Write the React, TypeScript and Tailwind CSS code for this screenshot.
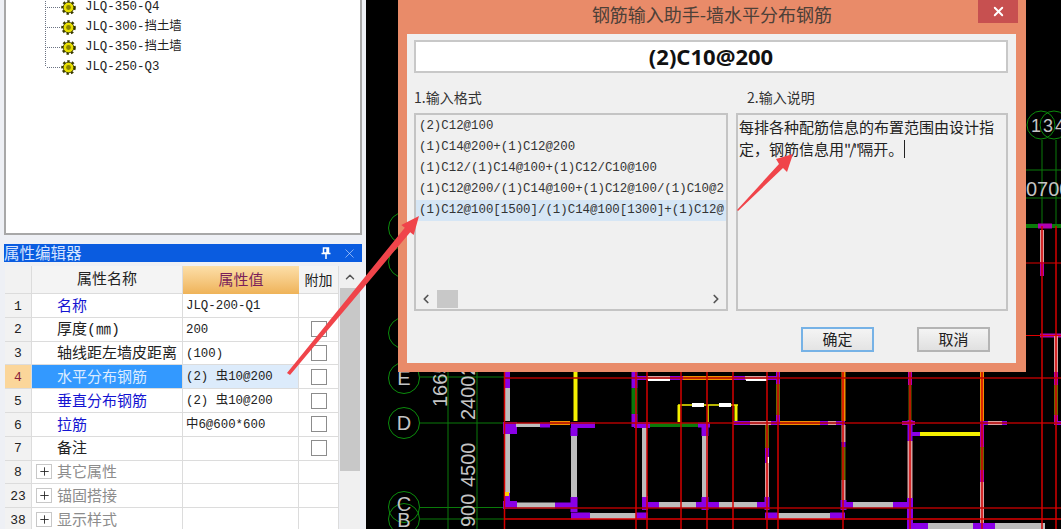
import { X, ChevronUp, ChevronLeft, ChevronRight, Plus } from "lucide-react";

const PURPLE = "#8a00e6";
const MAGENTA = "#b000b0";
const GRAY = "#bdbdbd";
const PINK = "#d8a0a0";
const OLIVE = "#6a6a00";
const GREEN = "#0a7a0a";
const ORANGE = "#f09000";
const YELLOW = "#f4f000";
const WHITE = "#ffffff";

// x1, y1, x2, y2, colour, width
const walls: [number, number, number, number, string, number][] = [
  [507, 372, 507, 388, PURPLE, 6],
  [507, 388, 507, 421, GRAY, 6],
  [510, 422, 510, 434, PURPLE, 14],
  [516, 425, 540, 425, GRAY, 4],
  [540, 425, 550, 425, PURPLE, 5],
  [550, 423, 570, 423, ORANGE, 4],
  [571, 425, 595, 425, PURPLE, 6],
  [574, 428, 574, 436, PURPLE, 7],
  [575.5, 372, 575.5, 421, YELLOW, 4],
  [507, 434, 507, 493, GRAY, 6],
  [510, 501, 510, 509, PURPLE, 14],
  [507, 493, 507, 501, PURPLE, 6],
  [517, 505.5, 555, 505.5, GRAY, 6],
  [555, 505.5, 571, 505.5, PURPLE, 6],
  [574, 436, 574, 497, GRAY, 6],
  [574, 497, 574, 512, PURPLE, 7],
  [571, 516, 590, 516, PURPLE, 7],
  [590, 516, 636, 516, GRAY, 6],
  [636, 516, 648, 516, PURPLE, 7],
  [645, 496, 645, 510, PURPLE, 6],
  [644.5, 427, 644.5, 497, GRAY, 5],
  [648, 505, 659, 505, PURPLE, 6],
  [659, 505, 696, 505, GRAY, 6],
  [696, 505, 713, 505, PURPLE, 6],
  [705, 436, 705, 497, GRAY, 6],
  [705, 425, 705, 436, PURPLE, 7],
  [705, 497, 705, 510, PURPLE, 7],
  [650, 425, 698, 425, GREEN, 4],
  [698, 425, 710, 425, PURPLE, 5],
  [634.5, 372, 634.5, 388, PURPLE, 6],
  [634.5, 388, 634.5, 414, GREEN, 6],
  [634.5, 414, 634.5, 427, PURPLE, 6],
  [634, 425, 650, 425, PURPLE, 6],
  [634, 378, 647, 378, PURPLE, 4],
  [647, 378, 670, 378, PINK, 4],
  [648, 380, 670, 380, WHITE, 2],
  [670, 378, 683, 378, PURPLE, 4],
  [683, 378, 732, 378, ORANGE, 4],
  [732, 378, 745, 378, PURPLE, 4],
  [745, 378, 768, 378, PINK, 4],
  [746, 380, 767, 380, WHITE, 2],
  [768, 378, 780, 378, PURPLE, 4],
  [778, 372, 778, 384, PURPLE, 4],
  [778, 384, 778, 415, OLIVE, 4],
  [778, 415, 778, 423, PURPLE, 4],
  [678, 405, 738, 405, YELLOW, 1.5],
  [679, 405, 679, 422, YELLOW, 3],
  [736, 405, 736, 422, YELLOW, 3],
  [708, 405, 708, 422, YELLOW, 1.5],
  [692, 405, 704, 405, WHITE, 4],
  [719, 405, 731, 405, WHITE, 4],
  [733, 423, 750, 423, PURPLE, 4],
  [750, 423, 771, 423, PINK, 4],
  [771, 423, 780, 423, PURPLE, 4],
  [780, 423, 820, 423, ORANGE, 4],
  [820, 423, 828, 423, PURPLE, 4],
  [828, 423, 836, 423, PINK, 4],
  [836, 423, 845, 423, PURPLE, 4],
  [767, 425, 767, 448, OLIVE, 4],
  [767, 448, 767, 463, PURPLE, 4],
  [768, 457, 768, 463, WHITE, 2],
  [767, 463, 767, 497, PINK, 4],
  [767, 497, 767, 510, PURPLE, 5],
  [713, 505, 719, 505, PURPLE, 6],
  [719, 505, 757, 505, GRAY, 6],
  [757, 505, 767, 505, PURPLE, 6],
  [620, 516, 636, 516, GRAY, 6],
  [765, 516, 778, 516, PURPLE, 7],
  [778, 516, 830, 516, GRAY, 6],
  [830, 516, 845, 516, PURPLE, 7],
  [843.5, 372, 843.5, 421, ORANGE, 4],
  [843.5, 425, 843.5, 442, PINK, 4],
  [843.5, 442, 843.5, 447, PURPLE, 4],
  [843.5, 447, 843.5, 480, OLIVE, 4],
  [843.5, 480, 843.5, 500, PINK, 4],
  [843.5, 500, 843.5, 510, PURPLE, 6],
  [843, 505, 853, 505, PURPLE, 6],
  [853, 505, 893, 505, GRAY, 6],
  [893, 505, 910, 505, PURPLE, 6],
  [910, 372, 910, 385, MAGENTA, 4],
  [910, 385, 910, 420, OLIVE, 3],
  [910, 420, 910, 441, PURPLE, 5],
  [910, 441, 910, 498, PINK, 5],
  [910, 498, 910, 529, PURPLE, 6],
  [902, 423, 915, 423, MAGENTA, 4],
  [910, 434, 920, 434, PURPLE, 4],
  [920, 434, 982, 434, YELLOW, 4],
  [982, 372, 982, 421, ORANGE, 4],
  [982, 421, 982, 447, MAGENTA, 4],
  [982, 447, 982, 470, OLIVE, 4],
  [982, 470, 982, 482, MAGENTA, 4],
  [982, 482, 982, 529, PINK, 4],
  [982, 423, 988, 423, PURPLE, 4],
  [988, 423, 1002, 423, PINK, 4],
  [1002, 423, 1007, 423, PURPLE, 4],
  [912, 526, 928, 526, PURPLE, 6],
  [928, 526, 973, 526, GRAY, 6],
  [973, 526, 995, 526, PURPLE, 6],
  [995, 526, 1045, 526, GRAY, 6],
  [1040, 335.5, 1061, 335.5, MAGENTA, 4],
  [1056, 337, 1056, 372, PINK, 4],
  [1056, 372, 1056, 385, MAGENTA, 4],
  [1056, 385, 1056, 415, OLIVE, 4],
  [1056, 415, 1056, 425, MAGENTA, 4],
  [1055, 423, 1061, 423, PURPLE, 4],
  [1026, 226, 1061, 226, GREEN, 4],
  [1038, 226, 1052, 226, MAGENTA, 5],
  [1042, 230, 1042, 262, PINK, 4],
  [1042, 262, 1042, 276, MAGENTA, 4],
  [1056, 336, 1056, 365, PINK, 4],
];

const redDark = [378, 423, 508];
const redBright = [519];
const redVerticals = [504.5, 636, 647, 681, 707, 733, 767, 778, 843, 910, 982, 1042, 1056];
const circles: [number, number][] = [
  [404, 228], [404, 262], [404, 333], [404, 378], [404, 423], [404, 507], [404, 519],
];

function Cad() {
  return (
    <svg viewBox="366 0 695 529" className="block h-full w-full bg-black">
      {circles.map(([cx, cy]) => (
        <circle key={cy} cx={cx} cy={cy} r={15.5} fill="none" stroke="#0c8c0c" strokeWidth={1} />
      ))}
      <circle cx={1041} cy={125} r={14} fill="none" stroke="#0c8c0c" />
      <circle cx={1054} cy={125} r={14} fill="none" stroke="#0c8c0c" />
      {[423, 377, 507.5, 519].map((y) => (
        <line key={y} x1={420} y1={y} x2={504} y2={y} stroke={GREEN} />
      ))}
      <line x1={448} y1={372} x2={448} y2={529} stroke={GREEN} />
      <line x1={477} y1={372} x2={477} y2={529} stroke={GREEN} />
      <line x1={1026} y1={170} x2={1061} y2={170} stroke={GREEN} />
      <line x1={1026} y1={198} x2={1061} y2={198} stroke={GREEN} />
      <line x1={1042} y1={140} x2={1042} y2={226} stroke={GREEN} />
      <line x1={1056} y1={140} x2={1056} y2={226} stroke={GREEN} />

      <g className="font-['Liberation_Sans',sans-serif]" fill="#c4c4c4" fontSize={20}>
        <text x={404} y={385} textAnchor="middle">E</text>
        <text x={404} y={430} textAnchor="middle">D</text>
        <text x={404} y={511} textAnchor="middle">C</text>
        <text x={404} y={527} textAnchor="middle">B</text>
        <text transform="rotate(-90 447 407)" x={447} y={407}>1665</text>
        <text transform="rotate(-90 475 420)" x={475} y={420}>24002</text>
        <text transform="rotate(-90 475 487)" x={475} y={487}>4500</text>
        <text transform="rotate(-90 475 527)" x={475} y={527}>900</text>
        <text x={1026} y={196}>0700</text>
        <text x={1031} y={132} fontSize={18}>1</text>
        <text x={1043} y={132} fontSize={18}>3</text>
        <text x={1055} y={132} fontSize={18}>4</text>
      </g>

      {walls.map(([x1, y1, x2, y2, c, w], i) => (
        <line key={i} x1={x1} y1={y1} x2={x2} y2={y2} stroke={c} strokeWidth={w} />
      ))}

      {redDark.map((y) => (
        <line key={y} x1={504} y1={y} x2={1061} y2={y} stroke="#b00000" strokeWidth={1.5} />
      ))}
      {redBright.map((y) => (
        <line key={y} x1={504} y1={y} x2={1061} y2={y} stroke="#e00000" strokeWidth={1.5} />
      ))}
      <line x1={1026} y1={335.5} x2={1061} y2={335.5} stroke="#e00000" />
      <line x1={1026} y1={263} x2={1061} y2={263} stroke="#e00000" />
      {redVerticals.map((x) => (
        <line key={x} x1={x} y1={x > 1040 ? 226 : 372} x2={x} y2={529} stroke="#d40000" strokeWidth={1.5} />
      ))}
      <rect x={505} y={492} width={4} height={4} fill="#ffd000" />
    </svg>
  );
}

function Gear() {
  return (
    <svg width="15" height="15" viewBox="0 0 15 15">
      <circle cx="7.5" cy="7.5" r="5.6" fill="none" stroke="#3a3a00" strokeWidth="3.4" strokeDasharray="2.2 1.9" />
      <circle cx="7.5" cy="7.5" r="5.3" fill="#e8e000" stroke="#2a2a00" strokeWidth="0.8" />
      <circle cx="7.5" cy="7.5" r="2.4" fill="#8a8400" />
    </svg>
  );
}

function TreeItem({ label }: { label: string }) {
  return (
    <div className="flex h-5 items-center">
      <div className="ml-px w-[13px] border-t border-dotted border-gray-500" />
      <div className="ml-px flex w-[24px]">
        <Gear />
      </div>
      <span className="text-[12.4px] leading-none text-[#222]">{label}</span>
    </div>
  );
}

const cell = "flex h-[23.8px] items-center border-b border-r border-[#dcdcdc]";

function Row({
  no,
  name,
  value,
  blue,
  check = true,
  active,
  group,
}: {
  no: number;
  name: string;
  value?: string;
  blue?: boolean;
  check?: boolean;
  active?: boolean;
  group?: boolean;
}) {
  return (
    <>
      <div className={`${cell} justify-center pt-[2px] text-[13px] ${active ? "bg-[#fbd69a] text-[#8a1f3a]" : "bg-[#f2f2f2] text-[#222]"}`}>{no}</div>
      <div
        className={`${cell} text-[15px] ${active ? "bg-[#3399ff] text-[#dcecff]" : group ? "bg-white text-[#8c8c8c]" : blue ? "bg-white text-[#1414d2]" : "bg-white text-[#222]"} ${group ? "pl-[4px]" : "pl-[25px]"}`}
      >
        {group && (
          <span className="mr-[5px] flex h-[15px] w-[16px] items-center justify-center border border-[#c8c8c8] text-[#222]">
            <Plus size={13} strokeWidth={1.6} />
          </span>
        )}
        <span className="pt-[5px]">{name}</span>
      </div>
      <div className={`${cell} whitespace-nowrap pl-[3px] pt-[2px] text-[12.4px] text-[#222] ${active ? "bg-[#dcebfb]" : "bg-white"}`}>{value}</div>
      <div className={`${cell} justify-center bg-white`}>
        {check && !group && <span className="h-[16px] w-[16px] border border-[#8c8c8c] bg-white" />}
      </div>
    </>
  );
}

function LeftPanel() {
  return (
    <div className="flex h-[529px] w-[366px] shrink-0 flex-col overflow-hidden bg-[#eef0f5] pl-[4px] pr-[4px] font-['Liberation_Mono','Noto_Sans_CJK_SC',monospace]">
      <div className="relative -mt-px h-[236px] shrink-0 border-2 border-t-0 border-[#a8a8a8] bg-white">
        <div className="absolute left-[39px] top-0 h-[67px] border-l border-dotted border-gray-500" />
        <div className="-mt-[2px] pl-[40px]">
          <TreeItem label="JLQ-350-Q4" />
          <TreeItem label="JLQ-300-挡土墙" />
          <TreeItem label="JLQ-350-挡土墙" />
          <TreeItem label="JLQ-250-Q3" />
        </div>
      </div>
      <div className="mt-[9px] flex h-[18px] shrink-0 items-center justify-between bg-[#0a5ce0] pr-[5px] font-['Noto_Sans_CJK_SC',sans-serif] text-[15.5px] leading-none text-[#d6e4ff]">
        <span>属性编辑器</span>
        <span className="flex items-center gap-[11px]">
          <svg width="10" height="12" viewBox="0 0 10 12" fill="none" stroke="#fff" strokeWidth="1.5">
            <path d="M2.5 1h5v5h-5zM6 1v5M0.5 6.5h9M5 7v5" />
          </svg>
          <X size={15} strokeWidth={1} className="text-[#cfe0ff]" />
        </span>
      </div>
      <div className="mt-[4px] flex flex-1 overflow-hidden pl-px">
        <div className="grid w-[334px] shrink-0 auto-rows-min grid-cols-[27px_151px_116px_40px] content-start">
          <div className="h-[28px] border-b border-r border-[#dcdcdc] bg-[#f2f2f2]" />
          <div className="flex h-[28px] items-center justify-center border-b border-r border-[#dcdcdc] bg-[#f4f4f4] pt-[4px] text-[15px] text-[#222]">属性名称</div>
          <div className="flex h-[28px] items-center justify-center bg-gradient-to-b from-[#fcdfa8] to-[#efb358] pt-[4px] text-[15px] text-[#7a1f5a]">属性值</div>
          <div className="flex h-[28px] items-center justify-center border-b border-r border-[#dcdcdc] bg-[#f4f4f4] pt-[4px] text-[14px] text-[#222]">附加</div>
          <Row no={1} name="名称" value="JLQ-200-Q1" blue check={false} />
          <Row no={2} name="厚度(㎜)" value="200" />
          <Row no={3} name="轴线距左墙皮距离" value="(100)" />
          <Row no={4} name="水平分布钢筋" value="(2) 虫10@200" active />
          <Row no={5} name="垂直分布钢筋" value="(2) 虫10@200" blue />
          <Row no={6} name="拉筋" value="中6@600*600" blue />
          <Row no={7} name="备注" />
          <Row no={8} name="其它属性" group />
          <Row no={23} name="锚固搭接" group />
          <Row no={38} name="显示样式" group />
        </div>
        <div className="ml-px flex w-[20px] shrink-0 flex-col bg-[#f0f0f0]">
          <div className="flex h-[22px] items-center justify-center text-[#555]">
            <ChevronUp size={14} strokeWidth={2.5} />
          </div>
          <div className="h-[183px] bg-[#c8c8c8]" />
        </div>
      </div>
    </div>
  );
}

const listItems = [
  "(2)C12@100",
  "(1)C14@200+(1)C12@200",
  "(1)C12/(1)C14@100+(1)C12/C10@100",
  "(1)C12@200/(1)C14@100+(1)C12@100/(1)C10@2",
  "(1)C12@100[1500]/(1)C14@100[1300]+(1)C12@",
];

function Dialog() {
  return (
    <div className="absolute left-[32px] top-0 flex h-[372px] w-[628px] flex-col bg-[#e98b69] font-['Noto_Sans_CJK_SC',sans-serif]">
      <div className="relative h-[34px] shrink-0 pt-[1px] text-center text-[18px] leading-[27px] text-[#4d4038]">
        钢筋输入助手-墙水平分布钢筋
        <div className="absolute right-[8px] top-0 flex h-[23px] w-[40px] items-center justify-center bg-[#c75050] text-white">
          <X size={15} strokeWidth={3} />
        </div>
      </div>
      <div className="mb-[9px] ml-[9px] mr-[10px] flex flex-1 flex-col bg-[#f0f0f0] pl-[7px] pr-[8px] pt-[6px]">
        <div className="flex h-[33px] shrink-0 items-center justify-center border-2 border-[#c8c8c8] bg-white pb-[1px] font-['Noto_Sans',sans-serif] text-[22px] font-bold text-[#111]">
          (2)C10@200
        </div>
        <div className="grid h-[40px] shrink-0 grid-cols-[314px_272px] items-center gap-x-[8px] pt-[8px] text-[14px] text-[#333]">
          <span>1.输入格式</span>
          <span className="pl-[11px]">2.输入说明</span>
        </div>
        <div className="grid h-[198px] shrink-0 grid-cols-[314px_272px] gap-x-[8px]">
          <div className="flex flex-col border-2 border-[#c4c4c4] bg-[#f0f0f0]">
            <div className="flex-1 overflow-hidden pt-px font-['Liberation_Mono',monospace] text-[12.4px] text-[#333]">
              {listItems.map((t, i) => (
                <div key={t} className={`h-[21px] whitespace-nowrap pl-[3px] leading-[21px] ${i === 4 ? "bg-[#d6e6f5]" : ""}`}>
                  {t}
                </div>
              ))}
            </div>
            <div className="flex h-[20px] shrink-0 items-center text-[#555]">
              <ChevronLeft size={14} strokeWidth={3} className="ml-[3px]" />
              <div className="ml-[4px] h-[18px] w-[21px] bg-[#c8c8c8]" />
              <ChevronRight size={14} strokeWidth={3} className="ml-auto mr-[3px]" />
            </div>
          </div>
          <div className="border-2 border-[#c4c4c4] bg-[#f0f0f0] pl-[1px] pt-[1px] text-[15px] leading-[22px] text-[#222]">
            <div className="whitespace-nowrap">每排各种配筋信息的布置范围由设计指</div>
            <div className="flex items-center whitespace-nowrap">
              定，钢筋信息用
              <span className="tracking-[-2px]">"/"</span>
              隔开。
              <span className="ml-[1px] h-[18px] w-px bg-[#222]" />
            </div>
          </div>
        </div>
        <div className="flex justify-end gap-[43px] pr-[18px] pt-[16px]">
          <div className="flex h-[25px] w-[73px] items-center justify-center border-2 border-[#76b2e6] bg-gradient-to-b from-[#f4f4f4] to-[#e4e4e4] text-[15px] text-[#222]">确定</div>
          <div className="flex h-[25px] w-[73px] items-center justify-center border-2 border-[#b4b4b4] bg-gradient-to-b from-[#f4f4f4] to-[#e0e0e0] text-[15px] text-[#222]">取消</div>
        </div>
      </div>
    </div>
  );
}

export default function App() {
  return (
    <div className="relative flex h-[529px] w-[1061px] overflow-hidden bg-black">
      <LeftPanel />
      <div className="relative flex-1">
        <Cad />
        <Dialog />
      </div>
      {/* red annotation arrows */}
      <svg className="pointer-events-none absolute left-0 top-0" width="1061" height="529">
        <polygon points="287,373 404.8,227.8 401.3,224.9 419,216 413.7,235.1 410.2,232.2 290,375" fill="#f0444a" />
        <polygon points="737,210 779,164 776,159 793,154 787,172 783,168 738,211" fill="#f0444a" />
      </svg>
    </div>
  );
}
